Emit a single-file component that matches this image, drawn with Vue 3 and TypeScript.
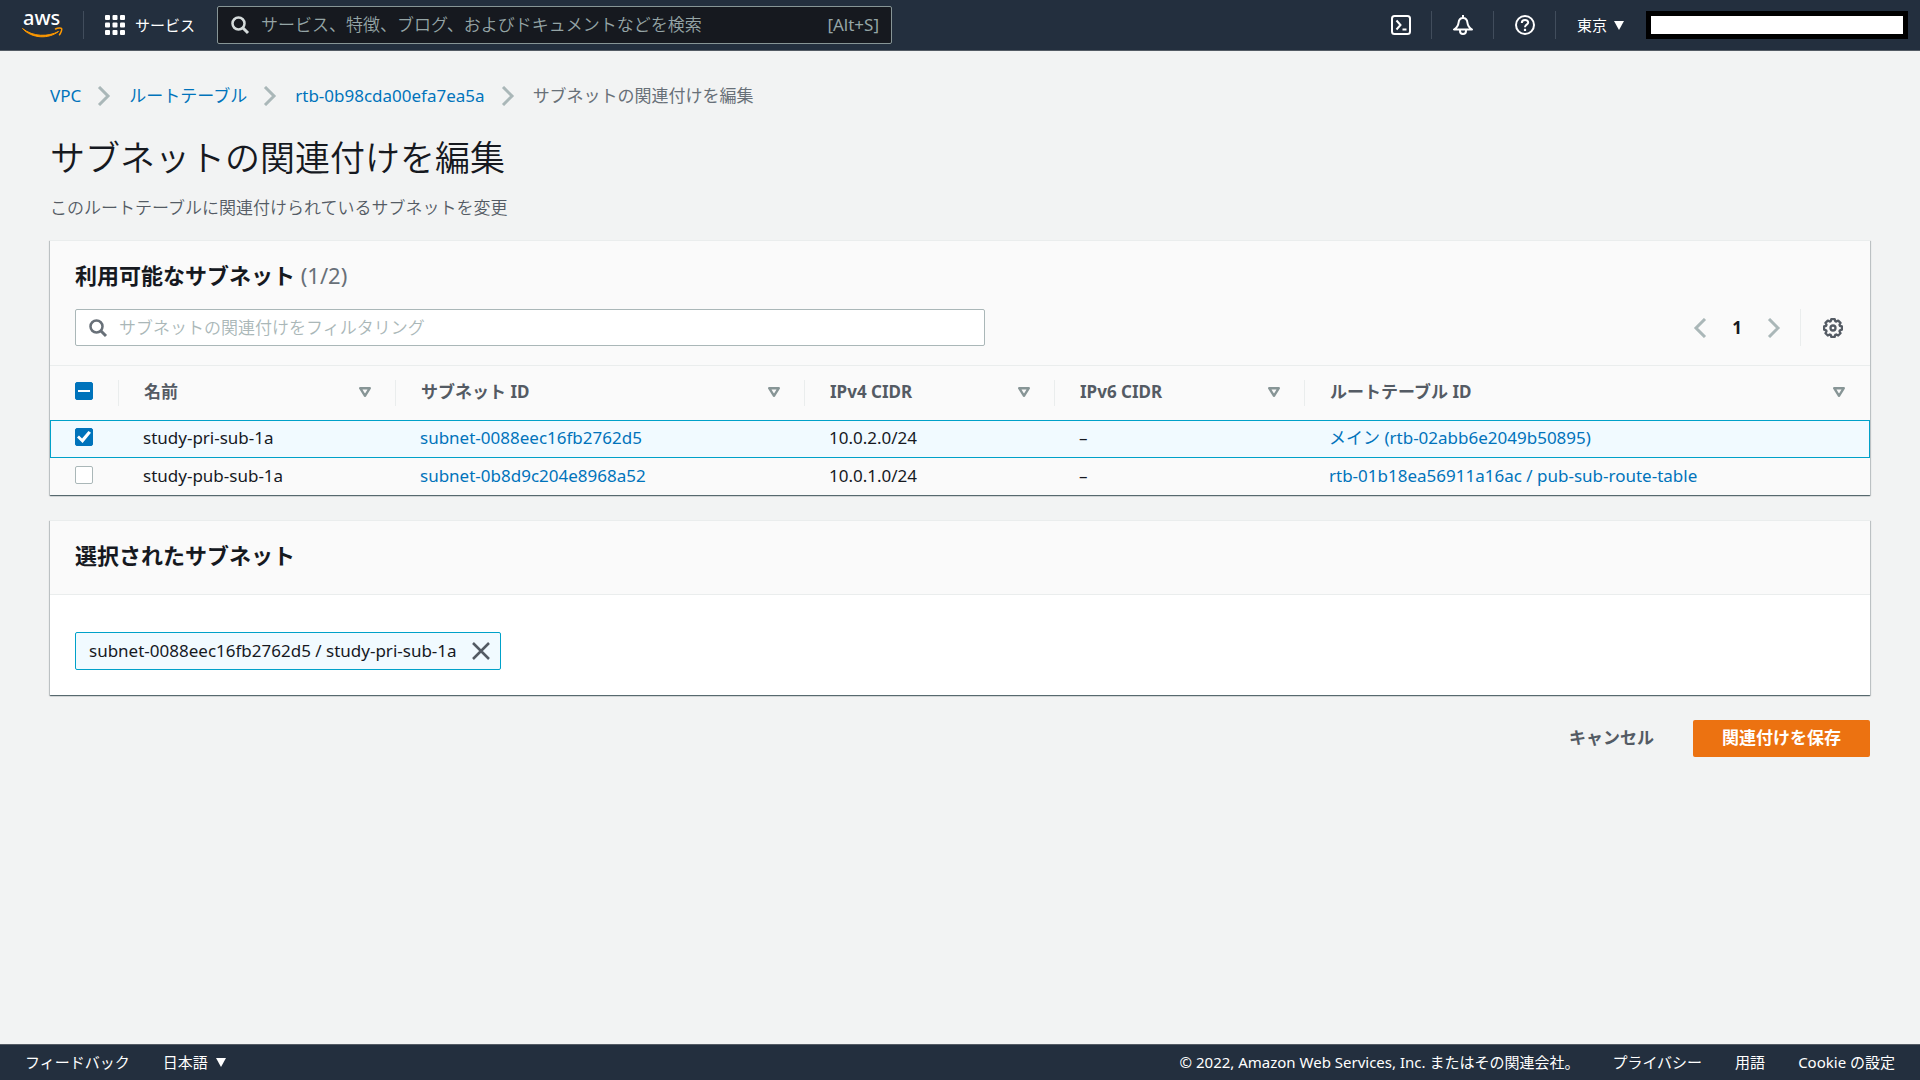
<script setup lang="ts">
import { computed, reactive, ref } from 'vue'

interface Subnet {
  name: string
  id: string
  ipv4: string
  ipv6: string
  routeTable: string
  selected: boolean
}

const columns = [
  { key: 'name', label: '名前' },
  { key: 'id', label: 'サブネット ID' },
  { key: 'ipv4', label: 'IPv4 CIDR' },
  { key: 'ipv6', label: 'IPv6 CIDR' },
  { key: 'route', label: 'ルートテーブル ID' },
]

const subnets = reactive<Subnet[]>([
  {
    name: 'study-pri-sub-1a',
    id: 'subnet-0088eec16fb2762d5',
    ipv4: '10.0.2.0/24',
    ipv6: '–',
    routeTable: 'メイン (rtb-02abb6e2049b50895)',
    selected: true,
  },
  {
    name: 'study-pub-sub-1a',
    id: 'subnet-0b8d9c204e8968a52',
    ipv4: '10.0.1.0/24',
    ipv6: '–',
    routeTable: 'rtb-01b18ea56911a16ac / pub-sub-route-table',
    selected: false,
  },
])

const search = ref('')
const filter = ref('')

const visible = computed(() =>
  subnets.filter((s) => `${s.name} ${s.id} ${s.ipv4}`.includes(filter.value)),
)
const chosen = computed(() => subnets.filter((s) => s.selected))
const allChosen = computed(() => chosen.value.length === subnets.length)
const someChosen = computed(() => chosen.value.length > 0 && !allChosen.value)

function toggleAll() {
  const next = !allChosen.value
  subnets.forEach((s) => (s.selected = next))
}
</script>

<template>
  <div class="console">
    <header class="topbar">
      <a class="logo" href="#" aria-label="AWS">
        <svg width="42" height="40" viewBox="0 0 42 40">
          <text class="logo-text" x="1" y="20">aws</text>
          <path d="M0.500 23.500C11 32 26 32 36.500 26.500C27 34 10 34 0.500 23.500z" fill="#ff9900" stroke="#ff9900" stroke-width="1" stroke-linejoin="round" />
          <path d="M33.500 24C36 22.800 39 22.800 39.600 23.500C40.200 24.500 39 28 37.500 29.800" fill="none" stroke="#ff9900" stroke-width="1.500" stroke-linecap="round" />
        </svg>
      </a>
      <span class="bar-line"></span>
      <button class="services" type="button">
        <svg width="20" height="20" viewBox="0 0 20 20" fill="#fff">
          <template v-for="r in 3" :key="r">
            <rect v-for="c in 3" :key="c" :x="(c - 1) * 7.5" :y="(r - 1) * 7.5" width="5" height="5" rx="1" />
          </template>
        </svg>
        サービス
      </button>
      <label class="search">
        <svg width="20" height="20" viewBox="0 0 20 20" fill="none" stroke="#d5dbdb" stroke-width="2.500">
          <circle cx="8.500" cy="8.500" r="6" />
          <path d="M13 13l5 5" stroke-width="3" />
        </svg>
        <input v-model="search" type="text" aria-label="検索" placeholder="サービス、特徴、ブログ、およびドキュメントなどを検索" />
        <span class="shortcut">[Alt+S]</span>
      </label>
      <div class="tools">
        <button class="tool" type="button" aria-label="CloudShell">
          <svg width="20" height="20" viewBox="0 0 20 20" fill="none" stroke="#fff" stroke-width="2">
            <rect x="1" y="1" width="18" height="18" rx="2.500" />
            <path d="M5.500 5.500l4 4.500-4 4.500M11.500 14.500h4" />
          </svg>
        </button>
        <span class="bar-line"></span>
        <button class="tool" type="button" aria-label="通知">
          <svg width="20" height="20" viewBox="0 0 20 20" fill="none" stroke="#fff" stroke-width="2" stroke-linejoin="round">
            <path d="M10 0v3M1 14.500h18C16 12.500 14.800 11 14.500 8 14.200 5 12.500 3 10 3S5.800 5 5.500 8C5.200 11 4 12.500 1 14.500z" />
            <path d="M7 15v1a3 3 0 0 0 6 0v-1" />
          </svg>
        </button>
        <span class="bar-line"></span>
        <button class="tool" type="button" aria-label="ヘルプ">
          <svg width="20" height="20" viewBox="0 0 20 20" fill="none" stroke="#fff" stroke-width="2">
            <circle cx="10" cy="10" r="9" />
            <path d="M6.800 8c0-4 6.400-4 6.400-.400 0 2.200-3.200 2-3.200 4.600" />
            <path d="M10 13.800v2.200" stroke-width="2.200" />
          </svg>
        </button>
        <span class="bar-line"></span>
        <button class="menu region" type="button" aria-haspopup="menu">
          東京
          <svg width="10" height="10" viewBox="0 0 10 10" fill="#fff"><path d="M0 1h10L5 10z" /></svg>
        </button>
        <div class="account"></div>
      </div>
    </header>

    <main class="content">
      <nav class="crumbs" aria-label="パンくずリスト">
        <a href="#">VPC</a>
        <svg class="chevron" width="20" height="20" viewBox="0 0 20 20"><path d="M5 1l9 9-9 9" /></svg>
        <a href="#">ルートテーブル</a>
        <svg class="chevron" width="20" height="20" viewBox="0 0 20 20"><path d="M5 1l9 9-9 9" /></svg>
        <a href="#">rtb-0b98cda00efa7ea5a</a>
        <svg class="chevron" width="20" height="20" viewBox="0 0 20 20"><path d="M5 1l9 9-9 9" /></svg>
        <span>サブネットの関連付けを編集</span>
      </nav>
      <h1>サブネットの関連付けを編集</h1>
      <p class="lead">このルートテーブルに関連付けられているサブネットを変更</p>

      <section class="card available">
        <h2>利用可能なサブネット <span class="count">({{ chosen.length }}/{{ subnets.length }})</span></h2>
        <div class="filter-row">
          <label class="filter">
            <svg width="20" height="20" viewBox="0 0 20 20" fill="none" stroke="#687078" stroke-width="2.500">
              <circle cx="8.500" cy="8.500" r="6" />
              <path d="M13 13l5 5" stroke-width="3" />
            </svg>
            <input v-model="filter" type="text" aria-label="フィルター" placeholder="サブネットの関連付けをフィルタリング" />
          </label>
          <div class="pager">
            <button class="icon-button" type="button" aria-label="前のページ">
              <svg class="chevron" width="20" height="20" viewBox="0 0 20 20"><path d="M15 1l-9 9 9 9" /></svg>
            </button>
            <button class="page" type="button">1</button>
            <button class="icon-button" type="button" aria-label="次のページ">
              <svg class="chevron" width="20" height="20" viewBox="0 0 20 20"><path d="M5 1l9 9-9 9" /></svg>
            </button>
            <span class="pager-line"></span>
            <button class="icon-button" type="button" aria-label="設定">
              <svg width="20" height="20" viewBox="0 0 20 20" fill="none" stroke="#545b64" stroke-width="2.300" stroke-linejoin="round">
                <path d="M8.300 1.200h3.400l.600 2 1 .400 1.900-1 2.300 2.300-1 1.900.400 1 2 .600v3.300l-2 .600-.400 1 1 1.900-2.300 2.300-1.900-1-1 .400-.600 2H8.300l-.600-2-1-.400-1.900 1-2.300-2.300 1-1.900-.400-1-2-.600V8.400l2-.600.400-1-1-1.900 2.300-2.300 1.900 1 1-.400z" />
                <circle cx="10" cy="10" r="2.500" />
              </svg>
            </button>
          </div>
        </div>
        <table>
          <colgroup>
            <col class="col-check" />
            <col class="col-name" />
            <col class="col-id" />
            <col class="col-cidr" />
            <col class="col-cidr" />
            <col />
          </colgroup>
          <thead>
            <tr>
              <th scope="col">
                <input type="checkbox" aria-label="すべて選択" :checked="allChosen" :indeterminate="someChosen" @change="toggleAll" />
              </th>
              <th v-for="col in columns" :key="col.key" scope="col">
                <div class="head">
                  {{ col.label }}
                  <svg width="12" height="10" viewBox="0 0 12 10" fill="none" stroke="#879596" stroke-width="2.400" stroke-linejoin="round"><path d="M1.200 1.200h9.600L6 8.800z" /></svg>
                </div>
              </th>
            </tr>
          </thead>
          <tbody>
            <tr v-for="s in visible" :key="s.id" :class="{ selected: s.selected }">
              <td><input v-model="s.selected" type="checkbox" :aria-label="s.name" /></td>
              <td>{{ s.name }}</td>
              <td><a href="#">{{ s.id }}</a></td>
              <td>{{ s.ipv4 }}</td>
              <td>{{ s.ipv6 }}</td>
              <td><a href="#">{{ s.routeTable }}</a></td>
            </tr>
          </tbody>
        </table>
      </section>

      <section class="card">
        <h2 class="picked-title">選択されたサブネット</h2>
        <div class="picked">
          <span v-for="s in chosen" :key="s.id" class="token">
            {{ s.id }} / {{ s.name }}
            <button class="icon-button" type="button" :aria-label="`${s.name} を削除`" @click="s.selected = false">
              <svg width="20" height="20" viewBox="0 0 20 20" fill="none" stroke="#545b64" stroke-width="2.500"><path d="M2 2l16 16M18 2L2 18" /></svg>
            </button>
          </span>
        </div>
      </section>

      <div class="actions">
        <button class="cancel" type="button">キャンセル</button>
        <button class="save" type="button">関連付けを保存</button>
      </div>
    </main>

    <footer class="footer">
      <a href="#">フィードバック</a>
      <button class="menu" type="button" aria-haspopup="menu">
        日本語
        <svg width="10" height="10" viewBox="0 0 10 10" fill="#fff"><path d="M0 1h10L5 10z" /></svg>
      </button>
      <span class="copyright">© 2022, Amazon Web Services, Inc. またはその関連会社。</span>
      <a href="#">プライバシー</a>
      <a href="#">用語</a>
      <a href="#">Cookie の設定</a>
    </footer>
  </div>
</template>

<style>
body {
  background: #f2f3f3;
}
</style>

<style scoped>
.console {
  display: flex;
  flex-direction: column;
  min-height: 100vh;
  font-family: "Noto Sans", "Noto Sans CJK JP", sans-serif;
  font-size: 17px;
  line-height: 24px;
  color: #16191f;
}
.console *,
.console *::after {
  box-sizing: border-box;
}
svg {
  display: block;
  flex: none;
}
button,
input {
  margin: 0;
  padding: 0;
  border: 0;
  background: none;
  font: inherit;
  color: inherit;
}
button {
  cursor: pointer;
}
a {
  color: #0073bb;
  text-decoration: none;
}

.topbar {
  display: flex;
  align-items: center;
  height: 51px;
  padding: 0 12px 0 22px;
  background: #232f3e;
  border-bottom: 1px solid #545b64;
  color: #fff;
  font-size: 15px;
}
.logo-text {
  font-size: 20px;
  font-weight: 500;
  line-height: 24px;
  fill: #fff;
}
.bar-line {
  width: 1px;
  height: 28px;
  background: #414d5c;
}
.logo {
  margin-right: 19px;
}
.services {
  display: flex;
  align-items: center;
  gap: 10px;
  margin: 0 22px 0 21px;
  white-space: nowrap;
}
.search {
  display: flex;
  align-items: center;
  gap: 11px;
  flex: 0 1 675px;
  height: 38px;
  padding: 0 12px;
  border: 1px solid #879596;
  border-radius: 2px;
  background: #16191f;
  color: #95a5a6;
  font-size: 17px;
}
.search input,
.filter input {
  flex: 1;
  min-width: 0;
  outline: none;
}
input::placeholder {
  color: #95a5a6;
  font-weight: 350;
  opacity: 1;
}
.tools {
  display: flex;
  align-items: center;
  margin-left: auto;
}
.tool {
  padding: 0 20px 0 21px;
}
.menu {
  display: flex;
  align-items: center;
  gap: 8px;
  white-space: nowrap;
}
.region {
  padding: 0 22px 0 21px;
  gap: 7px;
}
.account {
  width: 262px;
  height: 28px;
  border: 5px solid #000;
  background: #fff;
}

.content {
  flex: 1;
  padding: 33px 50px 40px;
}
.crumbs {
  display: flex;
  align-items: center;
  color: #687078;
  font-weight: 400;
}
.crumbs .chevron {
  margin: 0 15px 0 13px;
}
.chevron {
  fill: none;
  stroke: #aab7b8;
  stroke-width: 3;
}
h1 {
  margin: 28px 0 0;
  font-size: 35px;
  line-height: 44px;
  font-weight: 350;
}
.lead {
  margin: 16px 0 20px;
  color: #545b64;
  font-weight: 350;
}
.card {
  margin-bottom: 25px;
  border-top: 1px solid #eaeded;
  background: #fff;
  box-shadow: 0 1px 1px 0 rgba(0, 28, 36, 0.5), 1px 1px 1px 0 rgba(0, 28, 36, 0.15), -1px 1px 1px 0 rgba(0, 28, 36, 0.15);
}
.available {
  background: #fafafa;
}
h2 {
  margin: 0;
  padding: 20px 25px 0;
  font-size: 22px;
  line-height: 28px;
  font-weight: 700;
}
.count {
  color: #687078;
  font-weight: 400;
}
.filter-row {
  display: flex;
  align-items: center;
  justify-content: space-between;
  padding: 20px 25px 19px;
}
.filter {
  display: flex;
  align-items: center;
  gap: 11px;
  flex: 0 0 calc(50% + 25px);
  height: 37px;
  padding: 0 12px;
  border: 1px solid #aab7b8;
  border-radius: 2px;
  background: #fff;
}
.filter input::placeholder {
  color: #aab7b8;
}
.pager {
  display: flex;
  align-items: center;
  margin-right: 2px;
}
.page {
  width: 54px;
  font-weight: 700;
}
.pager-line {
  width: 1px;
  height: 37px;
  margin: 0 22px 0 16px;
  background: #eaeded;
}

table {
  width: 100%;
  table-layout: fixed;
  border-collapse: separate;
  border-spacing: 0;
}
.col-check {
  width: 69px;
}
.col-name {
  width: 277px;
}
.col-id {
  width: 409px;
}
.col-cidr {
  width: 250px;
}
th {
  height: 55px;
  padding: 0 0 2px;
  border-top: 1px solid #eaeded;
  color: #545b64;
  text-align: left;
}
.head {
  display: flex;
  align-items: center;
  justify-content: space-between;
  padding: 0 25px;
}
th:not(:last-child) {
  background: linear-gradient(#eaeded, #eaeded) right center / 1px 26px no-repeat;
}
td {
  height: 37px;
  padding: 0 24px 2px;
  white-space: nowrap;
}
th:first-child,
td:first-child {
  padding: 0 25px 4px;
}
.selected td {
  height: 38px;
  border-top: 1px solid #00a1c9;
  border-bottom: 1px solid #00a1c9;
  background: #f1faff;
}
.selected td:first-child {
  padding-left: 24px;
  border-left: 1px solid #00a1c9;
}
.selected td:last-child {
  border-right: 1px solid #00a1c9;
}
input[type="checkbox"] {
  display: grid;
  place-items: center;
  width: 18px;
  height: 18px;
  appearance: none;
  border: 1px solid #aab7b8;
  border-radius: 2px;
  background: #fff;
}
input[type="checkbox"]:checked,
input[type="checkbox"]:indeterminate {
  border-color: #0073bb;
  background: #0073bb;
}
input[type="checkbox"]:indeterminate::after {
  content: "";
  width: 12px;
  height: 2px;
  background: #fff;
}
input[type="checkbox"]:checked::after {
  content: "";
  width: 14px;
  height: 12px;
  background: #fff;
  clip-path: polygon(0 55%, 14% 38%, 36% 62%, 82% 0, 100% 14%, 40% 100%);
}

.picked-title {
  padding: 20px 25px 25px;
  border-bottom: 1px solid #eaeded;
  background: #fafafa;
}
.picked {
  padding: 37px 25px 25px;
}
.token {
  display: inline-flex;
  align-items: center;
  gap: 14px;
  height: 38px;
  padding: 0 9px 0 13px;
  border: 1px solid #00a1c9;
  border-radius: 2px;
  background: #f1faff;
  vertical-align: top;
}
.actions {
  display: flex;
  justify-content: flex-end;
  gap: 10px;
}
.actions button {
  height: 37px;
  padding: 0 29px 2px;
  border-radius: 2px;
  font-weight: 700;
}
.cancel {
  color: #545b64;
}
.actions .save {
  background: #ec7211;
  color: #fff;
}

.footer {
  display: flex;
  align-items: center;
  height: 36px;
  padding: 0 25px 2px;
  border-top: 1px solid #545b64;
  background: #232f3e;
  color: #fff;
  font-size: 15px;
  gap: 33px;
}
.footer a {
  color: #fff;
}
.copyright {
  margin-left: auto;
}
</style>
